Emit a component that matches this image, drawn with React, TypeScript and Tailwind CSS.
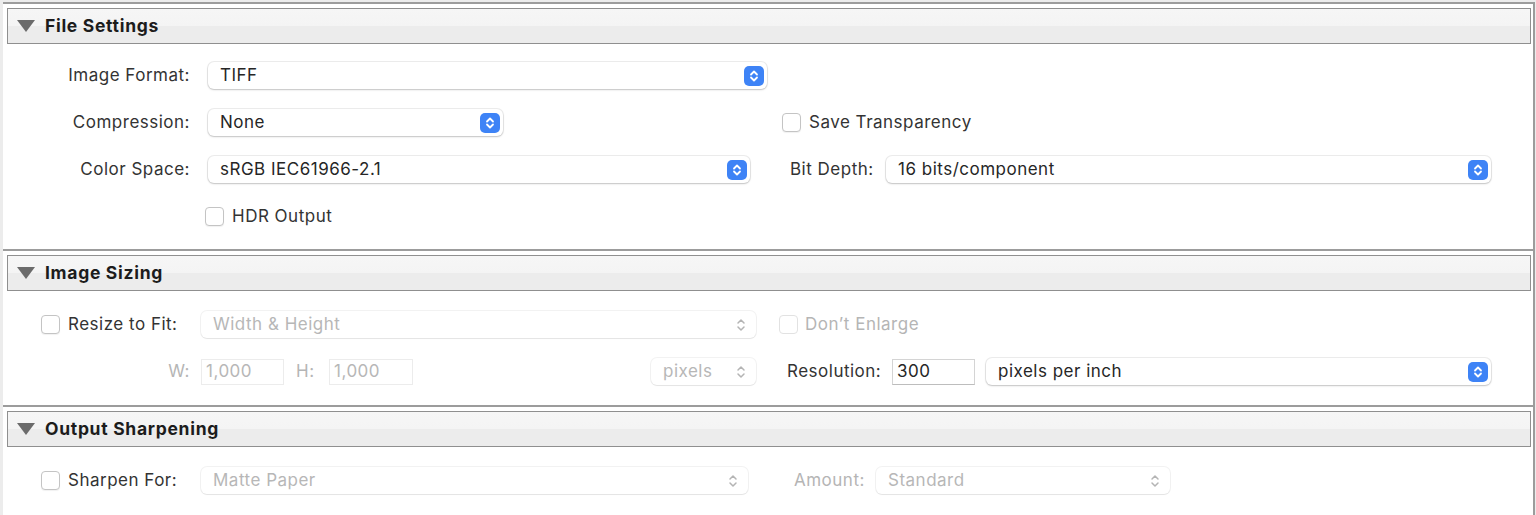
import React from 'react';

const font = { fontFamily: 'Inter, "Noto Sans", sans-serif' };

const Stepper = ({ disabled }: { disabled?: boolean }) =>
  disabled ? (
    <svg width="14" height="18" viewBox="0 0 14 18" className="mr-[8px]">
      <path d="M4 7 L7 4 L10 7" fill="none" stroke="#b4b4b4" strokeWidth="1.5" strokeLinecap="round" strokeLinejoin="round" />
      <path d="M4 11 L7 14 L10 11" fill="none" stroke="#b4b4b4" strokeWidth="1.5" strokeLinecap="round" strokeLinejoin="round" />
    </svg>
  ) : (
    <div className="w-[20px] h-[20px] mr-[3px] rounded-[5px] bg-[#3e83f6] flex items-center justify-center">
      <svg width="20" height="20" viewBox="0 0 20 20">
        <path d="M7 8.5 L10 5.5 L13 8.5" fill="none" stroke="#fff" strokeWidth="1.8" strokeLinecap="round" strokeLinejoin="round" />
        <path d="M7 11.5 L10 14.5 L13 11.5" fill="none" stroke="#fff" strokeWidth="1.8" strokeLinecap="round" strokeLinejoin="round" />
      </svg>
    </div>
  );

const Popup = ({ value, width, disabled }: { value: string; width: string; disabled?: boolean }) => (
  <div
    className={`${width} h-[27px] shrink-0 rounded-[6px] bg-white flex items-center justify-between pl-[12px] ${
      disabled
        ? 'text-[#b7b7b7] shadow-[0_0_0_1px_rgba(0,0,0,0.05),0_1px_1px_rgba(0,0,0,0.06)]'
        : 'text-[#262626] shadow-[0_0_0_1px_rgba(0,0,0,0.07),0_1px_2px_rgba(0,0,0,0.18)]'
    }`}
  >
    <span>{value}</span>
    <Stepper disabled={disabled} />
  </div>
);

const Checkbox = ({ disabled }: { disabled?: boolean }) => (
  <div
    className={`w-[19px] h-[19px] shrink-0 rounded-[4px] bg-white border ${
      disabled ? 'border-[#e2e2e2]' : 'border-[#c4c4c4] shadow-[0_1px_1px_rgba(0,0,0,0.06)]'
    }`}
  />
);

const TextField = ({ value, width, disabled }: { value: string; width: string; disabled?: boolean }) => (
  <div
    className={`${width} h-[26px] shrink-0 bg-white flex items-center pl-[4px] border ${
      disabled ? 'border-[#ececec] text-[#b7b7b7]' : 'border-[#d4d4d4] border-b-[#bdbdbd] text-[#262626]'
    }`}
  >
    {value}
  </div>
);

const Header = ({ title }: { title: string }) => (
  <div className="ml-[4px] mr-[2px] h-[36px] border-[1.5px] border-[#8f8f8f] bg-[linear-gradient(#f6f6f6_0%,#f4f4f4_50%,#ececec_50%,#ececec_100%)] flex items-center">
    <svg width="18" height="14" viewBox="0 0 18 14" className="ml-[9px]">
      <path d="M0 1 L18 1 L9 13 Z" fill="#6b6b6b" />
    </svg>
    <span className="ml-[10px] mt-[1px] text-[17.5px] font-bold tracking-[0.7px] text-[#1c1c1c]">{title}</span>
  </div>
);

const Label = ({ children, dim, className = '' }: { children: React.ReactNode; dim?: boolean; className?: string }) => (
  <span className={`shrink-0 ${dim ? 'text-[#b5b5b5]' : 'text-[#333]'} ${className}`}>{children}</span>
);

export default function App() {
  return (
    <div
      className="w-[1536px] h-[515px] overflow-hidden bg-[#ececec] pl-[3px] pr-[1px] pt-[2px] text-[17px] tracking-[0.5px]"
      style={font}
    >
      <div className="h-[600px] bg-white border-t-2 border-r-2 border-[#9c9c9c] pt-[4px]">
        {/* File Settings */}
        <Header title="File Settings" />
        <div className="flex flex-col gap-[20px] pt-[18px] pb-[19px]">
          <div className="flex items-center h-[27px]">
            <Label className="w-[187px] text-right">Image Format:</Label>
            <div className="ml-[18px]">
              <Popup value="TIFF" width="w-[559px]" />
            </div>
          </div>
          <div className="flex items-center h-[27px]">
            <Label className="w-[187px] text-right">Compression:</Label>
            <div className="ml-[18px]">
              <Popup value="None" width="w-[295px]" />
            </div>
            <div className="ml-[279px] flex items-center">
              <Checkbox />
              <Label className="ml-[8px]">Save Transparency</Label>
            </div>
          </div>
          <div className="flex items-center h-[27px]">
            <Label className="w-[187px] text-right">Color Space:</Label>
            <div className="ml-[18px]">
              <Popup value="sRGB IEC61966-2.1" width="w-[542px]" />
            </div>
            <Label className="ml-[40px] w-[96px]">Bit Depth:</Label>
            <Popup value="16 bits/component" width="w-[605px]" />
          </div>
          <div className="flex items-center h-[27px] pl-[202px]">
            <Checkbox />
            <Label className="ml-[8px]">HDR Output</Label>
          </div>
        </div>

        {/* Image Sizing */}
        <div className="border-t-2 border-[#9c9c9c] pt-[4px]">
          <Header title="Image Sizing" />
          <div className="flex flex-col gap-[20px] pt-[20px] pb-[20px]">
            <div className="flex items-center h-[27px]">
              <div className="w-[198px] pl-[38px] flex items-center shrink-0">
                <Checkbox />
                <Label className="ml-[8px]">Resize to Fit:</Label>
              </div>
              <Popup value="Width & Height" width="w-[555px]" disabled />
              <div className="ml-[23px] flex items-center">
                <Checkbox disabled />
                <Label dim className="ml-[7px]">Don’t Enlarge</Label>
              </div>
            </div>
            <div className="flex items-center h-[27px]">
              <Label dim className="w-[187px] text-right">W:</Label>
              <div className="ml-[11px]">
                <TextField value="1,000" width="w-[83px]" disabled />
              </div>
              <Label dim className="ml-[12px] w-[33px]">H:</Label>
              <TextField value="1,000" width="w-[84px]" disabled />
              <div className="ml-[238px]">
                <Popup value="pixels" width="w-[105px]" disabled />
              </div>
              <Label className="ml-[31px] w-[105px]">Resolution:</Label>
              <TextField value="300" width="w-[83px]" />
              <div className="ml-[11px]">
                <Popup value="pixels per inch" width="w-[505px]" />
              </div>
            </div>
          </div>
        </div>

        {/* Output Sharpening */}
        <div className="border-t-2 border-[#9c9c9c] pt-[4px]">
          <Header title="Output Sharpening" />
          <div className="flex flex-col pt-[20px]">
            <div className="flex items-center h-[27px]">
              <div className="w-[198px] pl-[38px] flex items-center shrink-0">
                <Checkbox />
                <Label className="ml-[8px]">Sharpen For:</Label>
              </div>
              <Popup value="Matte Paper" width="w-[547px]" disabled />
              <Label dim className="ml-[46px] w-[82px]">Amount:</Label>
              <Popup value="Standard" width="w-[294px]" disabled />
            </div>
          </div>
        </div>
      </div>
    </div>
  );
}
